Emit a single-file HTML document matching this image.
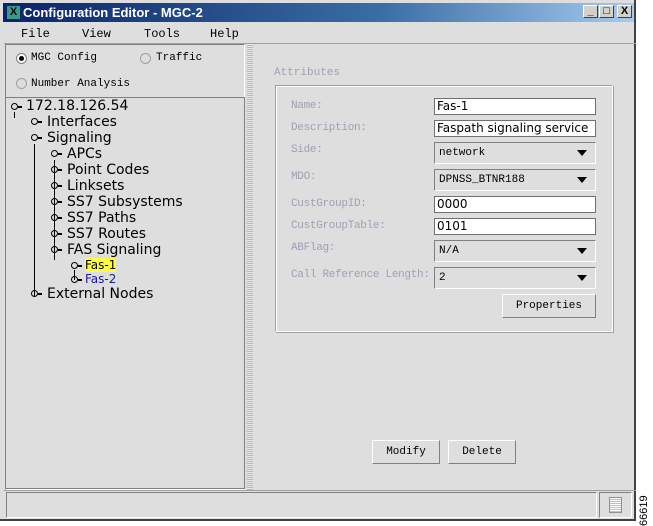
<!DOCTYPE html><html><head><style>
body{margin:0;width:653px;height:526px;background:#fff;position:relative;overflow:hidden;font-family:"Liberation Mono","DejaVu Sans Mono",monospace;}
.a{position:absolute}
.win{left:0;top:0;width:636px;height:521px;background:#dedede;border-right:2px solid #404040;border-bottom:2px solid #404040;box-sizing:border-box}
.title{left:3px;top:3px;width:631px;height:19px;background:linear-gradient(90deg,#0a246a,#3a6ea5 60%,#a6caf0);color:#fff;font:bold 13px "Liberation Sans",sans-serif;line-height:19px}
.wb{top:5px;width:15px;height:13px;background:#d4d0c8;border:1px solid;border-color:#fff #404040 #404040 #fff;box-sizing:border-box;font:bold 11px "Liberation Sans";text-align:center;line-height:11px;color:#000}
.menu{font-size:12px;top:27px;color:#000}
.sunk{border:1px solid;border-color:#808080 #fff #fff #808080;box-sizing:border-box}
.t{font:14px "DejaVu Sans",sans-serif;color:#000;white-space:nowrap}
.ic{width:7px;height:7px;border:1px solid #000;border-radius:50%;box-sizing:border-box}
.ic:after{content:"";position:absolute;left:6px;top:2px;width:4px;height:2px;background:#000}
.rd{width:11px;height:11px;border:1px solid #a0a0a0;border-radius:50%;box-sizing:border-box}
.lbl{font-size:11px;color:#a0a0b4;left:291px;letter-spacing:-0.3px}
.fld{left:434px;width:162px;height:17px;background:#fff;border:1px solid #707070;box-sizing:border-box;font:12px "DejaVu Sans",sans-serif;padding-left:2px;line-height:15px}
.cmb{left:434px;width:162px;height:22px;border:1px solid;border-color:#808080 #fff #fff #808080;box-sizing:border-box;font-size:11px;padding-left:4px;line-height:21px;background:#dedede}
.cmb:after{content:"";position:absolute;right:8px;top:7px;border-left:5px solid transparent;border-right:5px solid transparent;border-top:6px solid #000}
.btn{border:1px solid;border-color:#fff #808080 #808080 #fff;box-sizing:border-box;font-size:11px;text-align:center;background:#dedede}
</style></head><body>
<div class="a win"></div>
<div class="a title"><span style="display:inline-block;width:13px;height:13px;background:#3a9a8a;color:#000;text-align:center;line-height:13px;font-size:11px;margin:3px 3px 0 4px;vertical-align:top">X</span>Configuration Editor - MGC-2</div>
<div class="a wb" style="left:583px">_</div><div class="a wb" style="left:599px">□</div><div class="a wb" style="left:617px">X</div>
<div class="a menu" style="left:21px">File</div><div class="a menu" style="left:82px">View</div><div class="a menu" style="left:144px">Tools</div><div class="a menu" style="left:210px">Help</div>
<div class="a" style="left:4px;top:43px;width:632px;height:1px;background:#a0a0a0"></div>
<div class="a sunk" style="left:5px;top:44px;width:240px;height:446px"></div>
<div class="a rd" style="left:16px;top:53px;border-color:#808080;background:#fff"></div><div class="a" style="left:19px;top:56px;width:5px;height:5px;border-radius:50%;background:#000"></div>
<div class="a" style="left:31px;top:52px;font-size:11px">MGC Config</div>
<div class="a rd" style="left:140px;top:53px"></div><div class="a" style="left:156px;top:52px;font-size:11px">Traffic</div>
<div class="a rd" style="left:16px;top:78px"></div><div class="a" style="left:31px;top:78px;font-size:11px">Number Analysis</div>
<div class="a sunk" style="left:5px;top:97px;width:240px;height:392px;border-color:#808080"></div>
<div class="a" style="left:14px;top:112px;width:1px;height:6px;background:#000"></div>
<div class="a" style="left:34px;top:144px;width:1px;height:152px;background:#000"></div>
<div class="a" style="left:54px;top:160px;width:1px;height:100px;background:#000"></div>
<div class="a" style="left:74px;top:270px;width:1px;height:10px;background:#000"></div>
<div class="a t" style="left:26px;top:98px">172.18.126.54</div>
<div class="a t" style="left:47px;top:114px">Interfaces</div>
<div class="a t" style="left:47px;top:130px">Signaling</div>
<div class="a t" style="left:67px;top:146px">APCs</div>
<div class="a t" style="left:67px;top:162px">Point Codes</div>
<div class="a t" style="left:67px;top:178px">Linksets</div>
<div class="a t" style="left:67px;top:194px">SS7 Subsystems</div>
<div class="a t" style="left:67px;top:210px">SS7 Paths</div>
<div class="a t" style="left:67px;top:226px">SS7 Routes</div>
<div class="a t" style="left:67px;top:242px">FAS Signaling</div>
<div class="a t" style="left:85px;top:258px;font-size:12px;background:#ffff40;color:#000;line-height:14px">Fas-1</div>
<div class="a t" style="left:85px;top:272px;font-size:12px;color:#1a1aa0">Fas-2</div>
<div class="a t" style="left:47px;top:286px">External Nodes</div>
<div class="a ic" style="left:11px;top:103px"></div>
<div class="a ic" style="left:31px;top:118px"></div><div class="a ic" style="left:31px;top:134px"></div>
<div class="a ic" style="left:51px;top:150px"></div><div class="a ic" style="left:51px;top:166px"></div><div class="a ic" style="left:51px;top:182px"></div><div class="a ic" style="left:51px;top:198px"></div><div class="a ic" style="left:51px;top:214px"></div><div class="a ic" style="left:51px;top:230px"></div><div class="a ic" style="left:51px;top:246px"></div>
<div class="a ic" style="left:71px;top:262px"></div><div class="a ic" style="left:71px;top:276px"></div><div class="a ic" style="left:31px;top:290px"></div>
<div class="a" style="left:247px;top:44px;width:6px;height:446px;background:repeating-linear-gradient(0deg,#b8b8b8 0 1px,#e8e8e8 1px 2px)"></div>
<div class="a" style="left:274px;top:67px;font-size:11px;color:#a0a0b4">Attributes</div>
<div class="a" style="left:275px;top:85px;width:338px;height:247px;border:1px solid;border-color:#a0a0a0 #fff #fff #a0a0a0;box-sizing:border-box;box-shadow:inset 1px 1px 0 #fff,1px 1px 0 #a0a0a0"></div>
<div class="a lbl" style="top:100px">Name:</div><div class="a fld" style="top:98px">Fas-1</div>
<div class="a lbl" style="top:122px">Description:</div><div class="a fld" style="top:120px">Faspath signaling service</div>
<div class="a lbl" style="top:144px">Side:</div><div class="a cmb" style="top:142px">network</div>
<div class="a lbl" style="top:171px">MDO:</div><div class="a cmb" style="top:169px">DPNSS_BTNR188</div>
<div class="a lbl" style="top:198px">CustGroupID:</div><div class="a fld" style="top:196px">0000</div>
<div class="a lbl" style="top:220px">CustGroupTable:</div><div class="a fld" style="top:218px">0101</div>
<div class="a lbl" style="top:242px">ABFlag:</div><div class="a cmb" style="top:240px">N/A</div>
<div class="a lbl" style="top:269px">Call Reference Length:</div><div class="a cmb" style="top:267px">2</div>
<div class="a btn" style="left:502px;top:294px;width:94px;height:24px;line-height:22px">Properties</div>
<div class="a btn" style="left:372px;top:440px;width:68px;height:24px;line-height:22px">Modify</div>
<div class="a btn" style="left:448px;top:440px;width:68px;height:24px;line-height:22px">Delete</div>
<div class="a" style="left:4px;top:490px;width:632px;height:1px;background:#a0a0a0"></div>
<div class="a sunk" style="left:6px;top:492px;width:591px;height:26px"></div>
<div class="a sunk" style="left:599px;top:492px;width:33px;height:26px"></div>
<div class="a" style="left:609px;top:497px;width:13px;height:16px;border:1px solid #909090;box-sizing:border-box;background-image:repeating-linear-gradient(0deg,#c0c0c0 0 1px,#fff 1px 2px)"></div>
<div class="a" style="font:11px 'Liberation Sans',sans-serif;transform:rotate(-90deg);transform-origin:left top;top:526px;left:638px;color:#000">66619</div>
</body></html>
